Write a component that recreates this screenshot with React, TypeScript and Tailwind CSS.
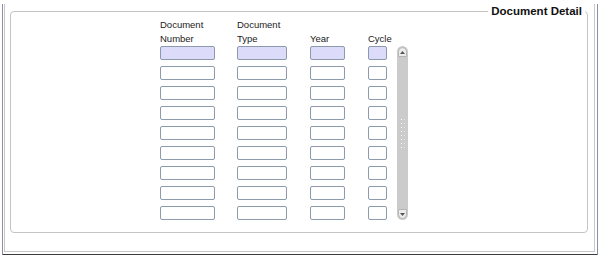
const rows = Array.from({ length: 9 }, (_, i) => i);

interface ColumnProps {
  line1: string;
  line2: string;
  width: string;
}

const Column = ({ line1, line2, width }: ColumnProps) => {
  return (
    <div className={`flex flex-col ${width}`}>
      <div className="h-[28px] text-[9.5px] leading-[14px] text-[#222] whitespace-nowrap">
        <div className="h-[14px]">{line1}</div>
        <div className="h-[14px]">{line2}</div>
      </div>
      <div className="flex flex-col gap-[6px]">
        {rows.map((r) => (
          <div
            key={r}
            className={`w-full h-[14px] rounded-[2px] border border-[#8d9aab] ${
              r === 0 ? "bg-[#dcdcfa]" : "bg-white"
            }`}
          />
        ))}
      </div>
    </div>
  );
};

const ScrollBar = () => {
  return (
    <div className="flex flex-col">
      <div className="h-[28px]" />
      <div className="w-[11px] h-[174px] rounded-full bg-[#cbcbcb] flex flex-col items-center justify-between">
        <div className="w-[9px] h-[10px] mt-[1px] rounded-t-full rounded-b-[2px] bg-[#ececec] border border-[#b4b4b4] flex items-center justify-center">
          <svg width="5" height="3" viewBox="0 0 5 3">
            <path d="M0 3 L2.5 0 L5 3 Z" fill="#555" />
          </svg>
        </div>
        <div className="flex flex-col gap-[3px] items-center">
          {Array.from({ length: 8 }, (_, i) => (
            <div key={i} className="flex gap-[2px]">
              <div className="w-[1px] h-[1px] bg-white" />
              <div className="w-[1px] h-[1px] bg-[#e8e8e8]" />
            </div>
          ))}
        </div>
        <div className="w-[9px] h-[10px] mb-[1px] rounded-b-full rounded-t-[2px] bg-[#ececec] border border-[#b4b4b4] flex items-center justify-center">
          <svg width="5" height="3" viewBox="0 0 5 3">
            <path d="M0 0 L2.5 3 L5 0 Z" fill="#555" />
          </svg>
        </div>
      </div>
    </div>
  );
};

export default function App() {
  return (
    <div
      className="w-[600px] h-[255px] bg-white"
      style={{ fontFamily: '"Liberation Sans", Arial, sans-serif' }}
    >
      <div className="ml-[2px] w-[596px] pl-[1px] pr-[2px] pb-[2px] border-l border-r border-[#8a90a8] border-b-2 border-b-[#3c3c3c]">
        <div className="h-[248px] border-l border-r border-b border-[#c8c8c8]">
          <fieldset className="ml-[5px] mt-[4px] w-[578px] h-[229px] border border-[#c4c4c4] rounded-[4px]">
            <legend className="ml-auto mr-[2px] px-[3px] text-[11.5px] leading-[14px] font-bold text-[#111]">
              Document Detail
            </legend>
            <div className="flex pl-[149px]">
              <Column line1="Document" line2="Number" width="w-[55px]" />
              <div className="ml-[22px]">
                <Column line1="Document" line2="Type" width="w-[50px]" />
              </div>
              <div className="ml-[23px]">
                <Column line1="" line2="Year" width="w-[35px]" />
              </div>
              <div className="ml-[23px]">
                <Column line1="" line2="Cycle" width="w-[19px]" />
              </div>
              <div className="ml-[10px]">
                <ScrollBar />
              </div>
            </div>
          </fieldset>
        </div>
      </div>
    </div>
  );
}
